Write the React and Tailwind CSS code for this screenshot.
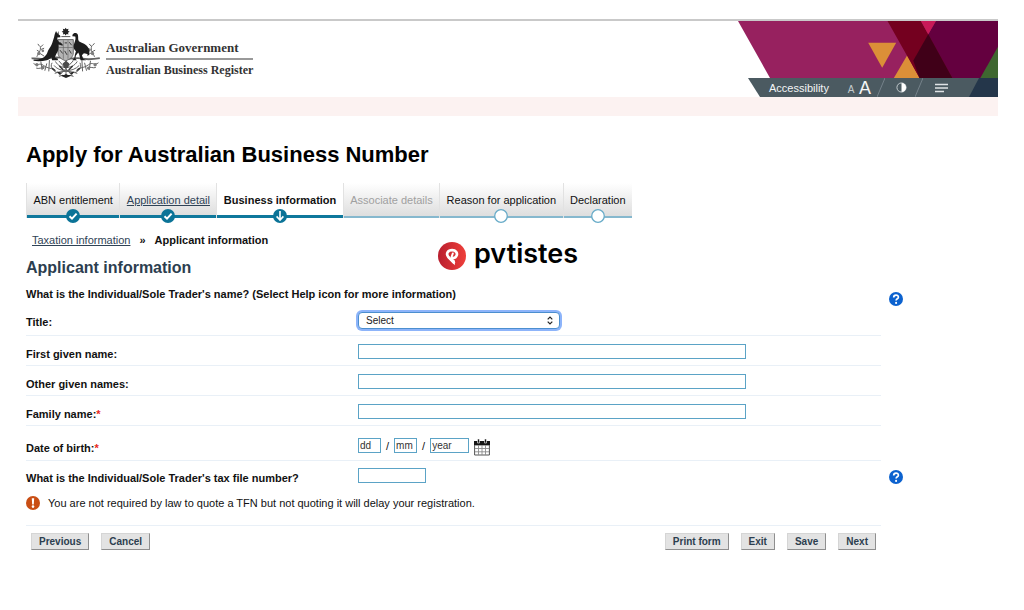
import { useState } from "react";

function CoatOfArms() {
  return (
    <svg viewBox="18 8 216 160" className="h-[53px] w-[72px] shrink-0" role="img" aria-label="Commonwealth Coat of Arms">
      <g fill="none" stroke="#636363" strokeWidth="3">
        <path d="M22 103c18-3 30 6 50 0s34-4 50 0 34-4 50 0 34 3 56-1" strokeWidth="5.500" />
        <path d="M38 98c4-12 14-18 10-32M48 84l-10-6M50 76l10-4M46 66l-5-7M50 68l7-7M60 96l-12-8" />
        <path d="M212 98c-4-12-14-18-8-34M202 84l12-6M200 76l-10-4M206 64l6-7M202 66l-6-7M190 94l12-8" />
        <path d="M28 118c12 10 18-4 30 6s20 6 34 14M36 132c8 4 16-4 24 2M50 112l4 26M68 118l-6 22M76 108l-2 34" />
        <path d="M224 116c-12 10-18-4-30 6s-20 6-34 14M216 130c-8 4-16-4-24 2M200 110l-4 28M182 116l6 24M174 108l2 34" />
        <path d="M94 112c8 14 20 18 32 18s26-4 34-18M90 124c14 20 56 22 76 0M104 110l40 44M148 110l-42 44M126 106v52" />
        <path d="M84 116c-8 14 4 26 16 30M168 116c8 14-4 26-16 30M92 148c20-8 48-8 68 0" />
      </g>
      <g fill="#7d7d7d">
        <circle cx="44" cy="88" r="5" />
        <circle cx="56" cy="80" r="4" />
        <circle cx="38" cy="122" r="5" />
        <circle cx="56" cy="130" r="5" />
        <circle cx="206" cy="88" r="5" />
        <circle cx="196" cy="78" r="4" />
        <circle cx="214" cy="122" r="5" />
        <circle cx="194" cy="132" r="5" />
      </g>
      <path d="M102 46h46v40c0 13-11 20-23 24-12-4-23-11-23-24z" fill="#b5b5b5" stroke="#555" strokeWidth="2.500" />
      <path d="M118 48v56M132 48v56M104 70h42" stroke="#666" strokeWidth="2" />
      <path d="M108 54l7 10M122 56h7M136 54l7 9M108 78l8 10M122 80l7 12M136 78l6 10" stroke="#3a3a3a" strokeWidth="3" />
      <path d="M125 10l3 5 5.500-1.500-1.500 5.500 5 3-5 3 1.500 5.500-5.500-1.500-3 5-3-5-5.500 1.500 1.500-5.500-5-3 5-3-1.500-5.500 5.500 1.500z" fill="#222" />
      <path d="M112 37h27" stroke="#555" strokeWidth="3" />
      <path d="M96 20l4 8 3-8 1 11c3 2 6 4 5 8l-9 1c-1 6 2 10 6 14l10 6-2 4-11-3c2 12-1 21-6 28l-5 11 10 4-1 4H84l-2-9c-5 4-8 8-14 9-12 3-26 4-40 2v-4c20 1 34-5 41-19 3-11 9-17 13-25 4-8 5-15 8-23 1-6 3-14 6-19z" fill="#1d1d1d" />
      <path d="M146 31c3-7 14-6 16 1 2 8-1 13 3 19 6 5 18 6 25 15 7 7 8 18 5 28-5-5-10-7-15-7l-6 6 4 11 9 4h-17l-4-16-3-7-7 9-2 10 5 4h-15l7-6 2-11 3-10c-9-7-8-16-5-24 3-8 5-14 3-20l-9-1z" fill="#1d1d1d" />
      <path d="M104 158c8-8 14-2 22-8 8 6 16 0 24 8l-10-2-14 6-14-6zM98 142l16 4-8 6zM152 142l-16 4 8 6z" fill="#252525" />
      <path d="M116 118l10-8 10 8-4 14h-12z" fill="#4b4b4b" />
      <path d="M84 132l10 8M168 132l-10 8M106 126l12 12M146 126l-12 12" stroke="#2f2f2f" strokeWidth="4" />
    </svg>
  );
}

function BannerArt() {
  return (
    <svg viewBox="42 32 779 172" preserveAspectRatio="none" className="block h-[57px] w-full" aria-hidden="true">
      <path d="M42 32H821V204H138z" fill="#97215f" />
      <path d="M432 98H516L474 173z" fill="#db8f38" />
      <path d="M635 32H821V204H537z" fill="#64003f" />
      <path d="M549 135L586 204H509z" fill="#db8f38" />
      <path d="M490 32H590L684 204H586z" fill="#74001f" />
      <path d="M590 32H635L612 72z" fill="#c81a58" />
      <path d="M612 72L684 204H586L567 152z" fill="#400018" />
      <path d="M821 110V204H768z" fill="#3f6730" />
    </svg>
  );
}

function AccessibilityBar() {
  return (
    <div className="relative ml-[10px] flex h-[19px] items-center bg-[#4b5a61] pl-[21px] text-[#f3f5f6] [clip-path:polygon(0_0,100%_0,100%_100%,12px_100%)]">
      <a href="#accessibility" className="w-[76px] text-[11px] leading-4">Accessibility</a>
      <button type="button" aria-label="Smaller text" className="w-[12px] pt-1 text-[10px] leading-3 text-[#c3cacd]">A</button>
      <button type="button" aria-label="Larger text" className="w-[16px] text-[18px] leading-[18px]">A</button>
      <svg viewBox="0 0 8 19" className="ml-1 h-[19px] w-[8px]" aria-hidden="true">
        <path d="M8 0L0 19" stroke="#75828a" />
      </svg>
      <button type="button" aria-label="Contrast" className="ml-[11px]">
        <svg viewBox="0 0 12 12" className="block size-[11px]" aria-hidden="true">
          <circle cx="6" cy="6" r="5" fill="none" stroke="#cdd3d6" />
          <path d="M6 1a5 5 0 0 1 0 10z" fill="#fff" />
        </svg>
      </button>
      <svg viewBox="0 0 8 19" className="ml-2 h-[19px] w-[8px]" aria-hidden="true">
        <path d="M8 0L0 19" stroke="#75828a" />
      </svg>
      <button type="button" aria-label="Menu" className="ml-3">
        <svg viewBox="0 0 13 10" className="block h-[10px] w-[13px]" fill="none" stroke="#dfe3e5" strokeWidth="1.500" aria-hidden="true">
          <path d="M0 1.500h13M0 5h13M0 8.500h9" />
        </svg>
      </button>
      <svg viewBox="0 0 29 19" className="ml-auto h-[19px] w-[29px]" aria-hidden="true">
        <path d="M10 0H29V19H0z" fill="#24364a" />
      </svg>
    </div>
  );
}

function StepMarker({ state }) {
  if (state === "none") return null;
  return (
    <svg viewBox="0 0 14 14" className="absolute top-[26px] left-1/2 size-[14px] -translate-x-1/2" fill="none" aria-hidden="true">
      {state === "todo" ? (
        <circle cx="7" cy="7" r="6.300" fill="#fff" stroke="#67abc8" strokeWidth="1.300" />
      ) : (
        <circle cx="7" cy="7" r="7" fill="#0b7397" />
      )}
      {state === "done" && <path d="M3.500 7.200L6 9.600 10.600 4.600" stroke="#fff" strokeWidth="2" />}
      {state === "current" && <path d="M7 2v9M3.600 7.400L7 11l3.400-3.600" stroke="#fff" strokeWidth="1.600" />}
    </svg>
  );
}

const steps = [
  { label: "ABN entitlement", state: "done", look: "border-b-[3px] border-[#0f789c] bg-linear-to-b from-white to-[#dedede]" },
  { label: "Application detail", state: "done", href: "#application", look: "border-b-[3px] border-[#0f789c] bg-linear-to-b from-white to-[#dedede]" },
  { label: "Business information", state: "current", look: "border-b-[3px] border-[#0f789c] font-bold" },
  { label: "Associate details", state: "none", look: "border-b-2 border-[#86b8ce] bg-linear-to-b from-white to-[#dedede] text-[#a0a0a0]" },
  { label: "Reason for application", state: "todo", look: "border-b-2 border-[#86b8ce] bg-linear-to-b from-white to-[#dedede]" },
  { label: "Declaration", state: "todo", look: "border-b-2 border-[#86b8ce] bg-linear-to-b from-white to-[#dedede]" },
];

function HelpButton() {
  return (
    <button type="button" aria-label="Help" className="block">
      <svg viewBox="0 0 14 14" className="block size-[14px]" fill="none" aria-hidden="true">
        <circle cx="7" cy="7" r="7" fill="#0c62cf" />
        <path d="M4.700 5.500c0-3.200 4.800-3.100 4.700-.300C9.400 6.800 7.100 6.800 7.100 8.600" stroke="#fff" strokeWidth="1.700" />
        <circle cx="7.100" cy="10.900" r="1.050" fill="#fff" />
      </svg>
    </button>
  );
}

function Row({ id, label, required, height, pad, help, rule = "border-b border-[#e9f0f7]", children }) {
  return (
    <div className="flex">
      <div className={`flex flex-1 items-start ${height} ${pad} ${rule}`}>
        <label htmlFor={id} className="mt-0.5 w-[332px] shrink-0 font-bold leading-4">
          {label}
          {required && <span className="text-[#e8281c]">*</span>}
        </label>
        {children}
      </div>
      <div className={`w-[117px] shrink-0 pl-2 ${pad}`}>{help && <div className="mt-0.5"><HelpButton /></div>}</div>
    </div>
  );
}

const field = "block h-[15px] border border-[#5ba3c6] bg-white px-px text-[10px] leading-3 text-[#333] outline-none placeholder:text-[#333]";

function CalendarIcon() {
  return (
    <svg viewBox="0 0 16 17" className="block h-[17px] w-[16px]" fill="none" aria-hidden="true">
      <path d="M.6 6h14.800v10H.6z" fill="#fff" stroke="#555" />
      <path d="M4.500 6v10M8 6v10M11.500 6v10M1 9.500h14M1 12.800h14" stroke="#8b8b8b" strokeWidth=".9" />
      <path d="M0 2h16v4H0z" fill="#161616" />
      <path d="M3.500 0h2v4h-2zM10.500 0h2v4h-2z" fill="#161616" stroke="#fff" strokeWidth=".6" />
    </svg>
  );
}

function PvtistesLogo() {
  return (
    <div className="flex items-center gap-2 pt-0.5">
      <svg viewBox="0 0 28 28" className="size-[28px]" aria-hidden="true">
        <defs>
          <linearGradient id="pin" x1="0" x2="1">
            <stop offset="0" stopColor="#b91f2f" />
            <stop offset="1" stopColor="#ee3f3a" />
          </linearGradient>
        </defs>
        <circle cx="14" cy="14" r="14" fill="url(#pin)" />
        <path d="M15.800 20.500L10.300 15C7.600 11.500 10 8.100 14.100 8.100c3.800 0 5.500 2.800 4.600 5.300-.8 2.100-2.600 2.900-4.300 2.600" fill="none" stroke="#fff" strokeWidth="2.700" strokeLinecap="round" strokeLinejoin="round" />
        <path d="M9.500 15.500l4.500 1 2.800 2v4.800z" fill="#fff" />
        <path d="M14.800 11.500l-1.200 3.500" fill="none" stroke="#fff" strokeWidth="2" strokeLinecap="round" />
      </svg>
      <span className="-mt-1 font-['Inter',sans-serif] text-[27px] font-semibold leading-8 text-black">pvtistes</span>
    </div>
  );
}

const actionButton =
  "h-[17px] border border-t-[#d5d5d5] border-l-[#d5d5d5] border-r-[#8f8f8f] border-b-[#8f8f8f] bg-[#e3e3e3] px-[7px] text-[10px] font-bold leading-[14px] text-[#2c3e4f]";

function ActionButton({ children }) {
  return <button type="button" className={actionButton}>{children}</button>;
}

export default function App() {
  const [title, setTitle] = useState("Select");
  return (
    <div className="min-h-screen bg-white pt-[19px] pr-[26px] pl-[18px] font-['Liberation_Sans',Arial,sans-serif] text-[11px] text-[#111]">
      <header className="flex justify-between border-t-2 border-[#c9c9c9]">
        <div className="flex items-start gap-1 pt-1.5 pl-3 font-['Liberation_Serif',serif] font-bold leading-5 text-[#333]">
          <CoatOfArms />
          <div className="mt-[11px]">
            <div className="h-[22px] border-b-2 border-[#999] text-[13px]">Australian Government</div>
            <div className="text-[12px]">Australian Business Register</div>
          </div>
        </div>
        <div className="w-[260px] shrink-0">
          <BannerArt />
          <AccessibilityBar />
        </div>
      </header>
      <div className="h-[19px] bg-[#fcf2f1]" />

      <main className="pl-2">
        <h1 className="mt-[25px] text-[22px] font-bold leading-7 text-black">Apply for Australian Business Number</h1>

        <nav aria-label="Application steps" className="mt-[14px]">
          <ol className="flex max-w-[606px]">
            {steps.map((s) => (
              <li key={s.label} className="flex h-[35px] flex-auto border-l border-[#e2e2e2]">
                <div className={`relative flex-1 pt-[9px] text-center leading-4 whitespace-nowrap ${s.look}`}>
                  {s.href ? <a href={s.href} className="text-[#2f4356] underline">{s.label}</a> : s.label}
                  <StepMarker state={s.state} />
                </div>
              </li>
            ))}
          </ol>
        </nav>

        <div className="mt-[14px] flex">
          <div className="w-[412px]">
            <nav aria-label="Breadcrumb" className="flex gap-[9px] pl-1.5 leading-4">
              <a href="#taxation" className="text-[#2f4356] underline">Taxation information</a>
              <span className="font-bold">»</span>
              <span className="font-bold">Applicant information</span>
            </nav>
            <h2 className="mt-[10px] text-[16px] font-bold leading-5 text-[#2c3e4f]">Applicant information</h2>
          </div>
          <PvtistesLogo />
        </div>

        <form onSubmit={(e) => e.preventDefault()}>
          <div className="mt-2 flex">
            <p className="h-4 flex-1 font-bold leading-4">
              What is the Individual/Sole Trader's name? (Select Help icon for more information)
            </p>
            <div className="h-4 w-[117px] shrink-0 pt-1.5 pl-2"><HelpButton /></div>
          </div>

          <Row id="title" label="Title:" height="h-[34px]" pad="pt-2.5">
            <div className="relative">
              <select
                id="title"
                value={title}
                onChange={(e) => setTitle(e.target.value)}
                className="block h-[17px] w-[202px] appearance-none rounded-[4px] border border-[#4c8fcf] bg-white pl-[7px] text-[10px] leading-3 text-[#222] ring-2 ring-[#8db4fa] outline-none"
              >
                <option>Select</option>
                <option>Mr</option>
                <option>Mrs</option>
                <option>Ms</option>
              </select>
              <svg viewBox="0 0 6 9" className="pointer-events-none absolute top-1 right-[7px] h-[9px] w-[6px]" fill="none" stroke="#222" strokeWidth="1.200" aria-hidden="true">
                <path d="M.7 3.300L3 1l2.300 2.300M.7 5.700L3 8l2.300-2.300" />
              </svg>
            </div>
          </Row>
          <Row id="first" label="First given name:" height="h-[30px]" pad="pt-2">
            <input id="first" type="text" className={`${field} w-[388px]`} />
          </Row>
          <Row id="other" label="Other given names:" height="h-[30px]" pad="pt-2">
            <input id="other" type="text" className={`${field} w-[388px]`} />
          </Row>
          <Row id="family" label="Family name:" required height="h-[30px]" pad="pt-2">
            <input id="family" type="text" className={`${field} w-[388px]`} />
          </Row>
          <Row id="day" label="Date of birth:" required height="h-[35px]" pad="pt-3">
            <div className="flex gap-[5px] leading-4">
              <input id="day" type="text" placeholder="dd" aria-label="Day" className={`${field} w-[23px]`} />
              <span>/</span>
              <input type="text" placeholder="mm" aria-label="Month" className={`${field} w-[23px]`} />
              <span>/</span>
              <input type="text" placeholder="year" aria-label="Year" className={`${field} w-[39px]`} />
              <button type="button" aria-label="Choose date" className="mt-px block"><CalendarIcon /></button>
            </div>
          </Row>
          <Row id="tfn" label="What is the Individual/Sole Trader's tax file number?" height="h-[30px]" pad="pt-[7px]" rule="" help>
            <input id="tfn" type="text" className={`${field} w-[68px]`} />
          </Row>

          <div className="mr-[117px]">
            <div className="flex h-[35px] items-start gap-2 border-b border-[#e9f0f7] pt-1 leading-4">
              <svg viewBox="0 0 14 14" className="mt-px size-[14px]" aria-hidden="true">
                <circle cx="7" cy="7" r="7" fill="#c94e14" />
                <path d="M5.800 2.200h2.400L7.800 8.400H6.200z" fill="#fff" />
                <circle cx="7" cy="10.600" r="1.300" fill="#fff" />
              </svg>
              <p>You are not required by law to quote a TFN but not quoting it will delay your registration.</p>
            </div>
            <div className="flex justify-between px-[5px] pt-[7px]">
              <div className="flex gap-3">
                <ActionButton>Previous</ActionButton>
                <ActionButton>Cancel</ActionButton>
              </div>
              <div className="flex gap-3">
                <ActionButton>Print form</ActionButton>
                <ActionButton>Exit</ActionButton>
                <ActionButton>Save</ActionButton>
                <ActionButton>Next</ActionButton>
              </div>
            </div>
          </div>
        </form>
      </main>
    </div>
  );
}
